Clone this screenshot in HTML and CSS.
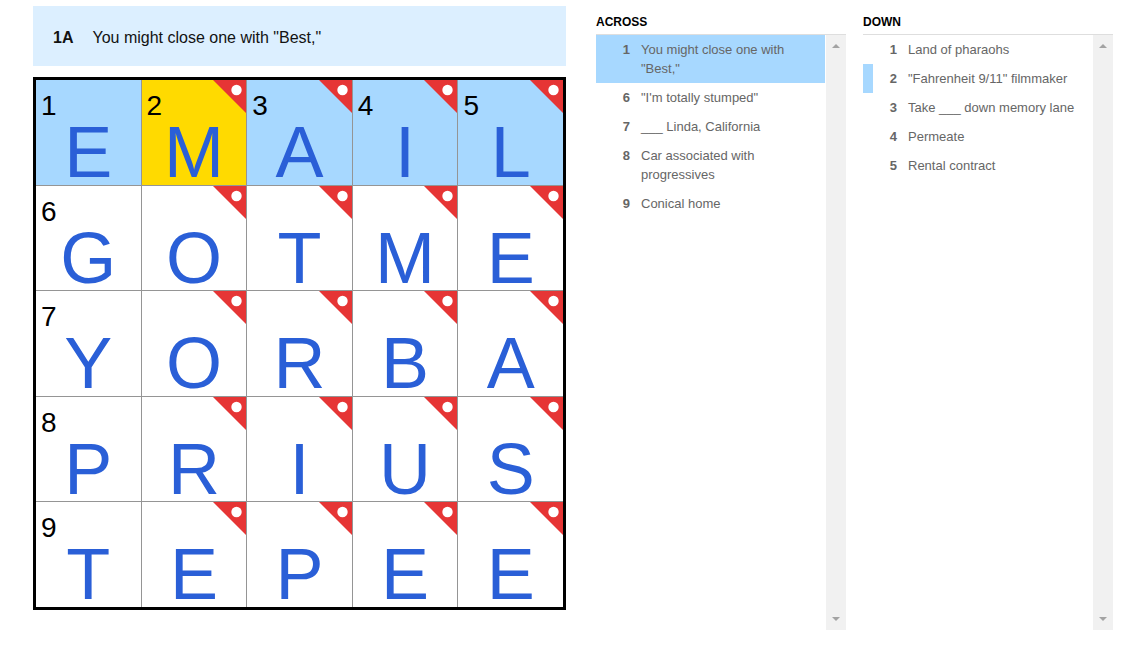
FILE: index.html
```html
<!DOCTYPE html>
<html>
<head>
<meta charset="utf-8">
<link rel="stylesheet" href="styles.css">
</head>
<body>
<div class="page">
  <div class="left">
    <div class="cluebar"><span class="cb-num">1A</span><span class="cb-text">You might close one with "Best,"</span></div>
    <div class="grid">
      <div class="cell sel"><span class="num">1</span><span class="let">E</span></div>
      <div class="cell cur"><span class="num">2</span><span class="let">M</span><svg class="flag" viewBox="0 0 33 33"><polygon points="0,0 33,0 33,33"/><circle cx="23.5" cy="10" r="5.2"/></svg></div>
      <div class="cell sel"><span class="num">3</span><span class="let">A</span><svg class="flag" viewBox="0 0 33 33"><polygon points="0,0 33,0 33,33"/><circle cx="23.5" cy="10" r="5.2"/></svg></div>
      <div class="cell sel"><span class="num">4</span><span class="let">I</span><svg class="flag" viewBox="0 0 33 33"><polygon points="0,0 33,0 33,33"/><circle cx="23.5" cy="10" r="5.2"/></svg></div>
      <div class="cell sel"><span class="num">5</span><span class="let">L</span><svg class="flag" viewBox="0 0 33 33"><polygon points="0,0 33,0 33,33"/><circle cx="23.5" cy="10" r="5.2"/></svg></div>

      <div class="cell"><span class="num">6</span><span class="let">G</span></div>
      <div class="cell"><span class="num">&nbsp;</span><span class="let">O</span><svg class="flag" viewBox="0 0 33 33"><polygon points="0,0 33,0 33,33"/><circle cx="23.5" cy="10" r="5.2"/></svg></div>
      <div class="cell"><span class="num">&nbsp;</span><span class="let">T</span><svg class="flag" viewBox="0 0 33 33"><polygon points="0,0 33,0 33,33"/><circle cx="23.5" cy="10" r="5.2"/></svg></div>
      <div class="cell"><span class="num">&nbsp;</span><span class="let">M</span><svg class="flag" viewBox="0 0 33 33"><polygon points="0,0 33,0 33,33"/><circle cx="23.5" cy="10" r="5.2"/></svg></div>
      <div class="cell"><span class="num">&nbsp;</span><span class="let">E</span><svg class="flag" viewBox="0 0 33 33"><polygon points="0,0 33,0 33,33"/><circle cx="23.5" cy="10" r="5.2"/></svg></div>

      <div class="cell"><span class="num">7</span><span class="let">Y</span></div>
      <div class="cell"><span class="num">&nbsp;</span><span class="let">O</span><svg class="flag" viewBox="0 0 33 33"><polygon points="0,0 33,0 33,33"/><circle cx="23.5" cy="10" r="5.2"/></svg></div>
      <div class="cell"><span class="num">&nbsp;</span><span class="let">R</span><svg class="flag" viewBox="0 0 33 33"><polygon points="0,0 33,0 33,33"/><circle cx="23.5" cy="10" r="5.2"/></svg></div>
      <div class="cell"><span class="num">&nbsp;</span><span class="let">B</span><svg class="flag" viewBox="0 0 33 33"><polygon points="0,0 33,0 33,33"/><circle cx="23.5" cy="10" r="5.2"/></svg></div>
      <div class="cell"><span class="num">&nbsp;</span><span class="let">A</span><svg class="flag" viewBox="0 0 33 33"><polygon points="0,0 33,0 33,33"/><circle cx="23.5" cy="10" r="5.2"/></svg></div>

      <div class="cell"><span class="num">8</span><span class="let">P</span></div>
      <div class="cell"><span class="num">&nbsp;</span><span class="let">R</span><svg class="flag" viewBox="0 0 33 33"><polygon points="0,0 33,0 33,33"/><circle cx="23.5" cy="10" r="5.2"/></svg></div>
      <div class="cell"><span class="num">&nbsp;</span><span class="let">I</span><svg class="flag" viewBox="0 0 33 33"><polygon points="0,0 33,0 33,33"/><circle cx="23.5" cy="10" r="5.2"/></svg></div>
      <div class="cell"><span class="num">&nbsp;</span><span class="let">U</span><svg class="flag" viewBox="0 0 33 33"><polygon points="0,0 33,0 33,33"/><circle cx="23.5" cy="10" r="5.2"/></svg></div>
      <div class="cell"><span class="num">&nbsp;</span><span class="let">S</span><svg class="flag" viewBox="0 0 33 33"><polygon points="0,0 33,0 33,33"/><circle cx="23.5" cy="10" r="5.2"/></svg></div>

      <div class="cell"><span class="num">9</span><span class="let">T</span></div>
      <div class="cell"><span class="num">&nbsp;</span><span class="let">E</span><svg class="flag" viewBox="0 0 33 33"><polygon points="0,0 33,0 33,33"/><circle cx="23.5" cy="10" r="5.2"/></svg></div>
      <div class="cell"><span class="num">&nbsp;</span><span class="let">P</span><svg class="flag" viewBox="0 0 33 33"><polygon points="0,0 33,0 33,33"/><circle cx="23.5" cy="10" r="5.2"/></svg></div>
      <div class="cell"><span class="num">&nbsp;</span><span class="let">E</span><svg class="flag" viewBox="0 0 33 33"><polygon points="0,0 33,0 33,33"/><circle cx="23.5" cy="10" r="5.2"/></svg></div>
      <div class="cell"><span class="num">&nbsp;</span><span class="let">E</span><svg class="flag" viewBox="0 0 33 33"><polygon points="0,0 33,0 33,33"/><circle cx="23.5" cy="10" r="5.2"/></svg></div>
    </div>
  </div>

  <div class="panel">
    <div class="phead">ACROSS</div>
    <div class="pbody">
      <ul class="list">
        <li class="clue active"><span class="cn">1</span><span class="ct">You might close one with "Best,"</span></li>
        <li class="clue"><span class="cn">6</span><span class="ct">"I'm totally stumped"</span></li>
        <li class="clue"><span class="cn">7</span><span class="ct">___ Linda, California</span></li>
        <li class="clue"><span class="cn">8</span><span class="ct">Car associated with progressives</span></li>
        <li class="clue"><span class="cn">9</span><span class="ct">Conical home</span></li>
      </ul>
      <div class="sbar"><span class="up"></span><span class="down"></span></div>
    </div>
  </div>

  <div class="panel">
    <div class="phead">DOWN</div>
    <div class="pbody">
      <ul class="list">
        <li class="clue"><span class="cn">1</span><span class="ct">Land of pharaohs</span></li>
        <li class="clue cross"><span class="cn">2</span><span class="ct">"Fahrenheit 9/11" filmmaker</span></li>
        <li class="clue"><span class="cn">3</span><span class="ct">Take ___ down memory lane</span></li>
        <li class="clue"><span class="cn">4</span><span class="ct">Permeate</span></li>
        <li class="clue"><span class="cn">5</span><span class="ct">Rental contract</span></li>
      </ul>
      <div class="sbar"><span class="up"></span><span class="down"></span></div>
    </div>
  </div>
</div>
</body>
</html>
```

FILE: styles.css
```css
html, body {
  margin: 0;
  padding: 0;
  background: #ffffff;
  font-family: "Liberation Sans", Arial, sans-serif;
}

.page {
  display: flex;
  align-items: flex-start;
  padding-left: 33px;
}

.left {
  width: 533px;
  padding-top: 6px;
  margin-right: 30px;
}

.cluebar {
  height: 60px;
  background: #dcefff;
  display: flex;
  align-items: center;
  padding-left: 20px;
  padding-top: 4px;
  box-sizing: border-box;
  font-size: 16px;
  color: #121212;
}

.cb-num {
  font-weight: bold;
  margin-right: 19px;
}

.grid {
  margin-top: 11px;
  width: 533px;
  height: 533px;
  box-sizing: border-box;
  border: 3px solid #000;
  background: #959595;
  display: grid;
  grid-template-columns: repeat(5, 1fr);
  grid-template-rows: repeat(5, 1fr);
  gap: 1px;
}

.cell {
  position: relative;
  background: #ffffff;
  display: flex;
  flex-direction: column;
}

.cell.sel { background: #a7d8ff; }
.cell.cur { background: #ffda00; }

.num {
  display: block;
  font-size: 28px;
  line-height: 28px;
  padding-top: 12px;
  padding-left: 5px;
  color: #000;
}

.let {
  display: block;
  font-size: 72px;
  line-height: 64px;
  text-align: center;
  color: #2a5fd7;
}

.flag {
  position: absolute;
  top: 0;
  right: 0;
  width: 33px;
  height: 33px;
}

.flag polygon { fill: #e63535; }
.flag circle { fill: #ffffff; }

.panel {
  width: 250px;
  margin-right: 17px;
}

.phead {
  font-size: 12px;
  font-weight: bold;
  color: #000;
  line-height: 14px;
  padding-top: 15px;
  padding-bottom: 5px;
  border-bottom: 1px solid #dedede;
}

.pbody {
  display: flex;
  height: 595px;
}

.list {
  list-style: none;
  margin: 0;
  padding: 0;
  flex: 1;
  margin-right: 1px;
}

.clue {
  display: flex;
  padding: 5px 8px 5px 0;
  font-size: 13px;
  line-height: 19px;
  color: #666666;
}

.clue.active { background: #a7d8ff; }
.clue.cross { box-shadow: inset 10px 0 0 #a7d8ff; }

.cn {
  flex: none;
  width: 34px;
  text-align: right;
  font-weight: bold;
  margin-right: 11px;
}

.ct { flex: 1; }

.sbar {
  flex: none;
  width: 20px;
  background: #f1f1f1;
  display: flex;
  flex-direction: column;
  justify-content: space-between;
  align-items: center;
  padding: 9px 0 9px;
  box-sizing: border-box;
}

.up {
  width: 0;
  height: 0;
  border-left: 4px solid transparent;
  border-right: 4px solid transparent;
  border-bottom: 4px solid #a3a3a3;
}

.down {
  width: 0;
  height: 0;
  border-left: 4px solid transparent;
  border-right: 4px solid transparent;
  border-top: 4px solid #a3a3a3;
}
```
